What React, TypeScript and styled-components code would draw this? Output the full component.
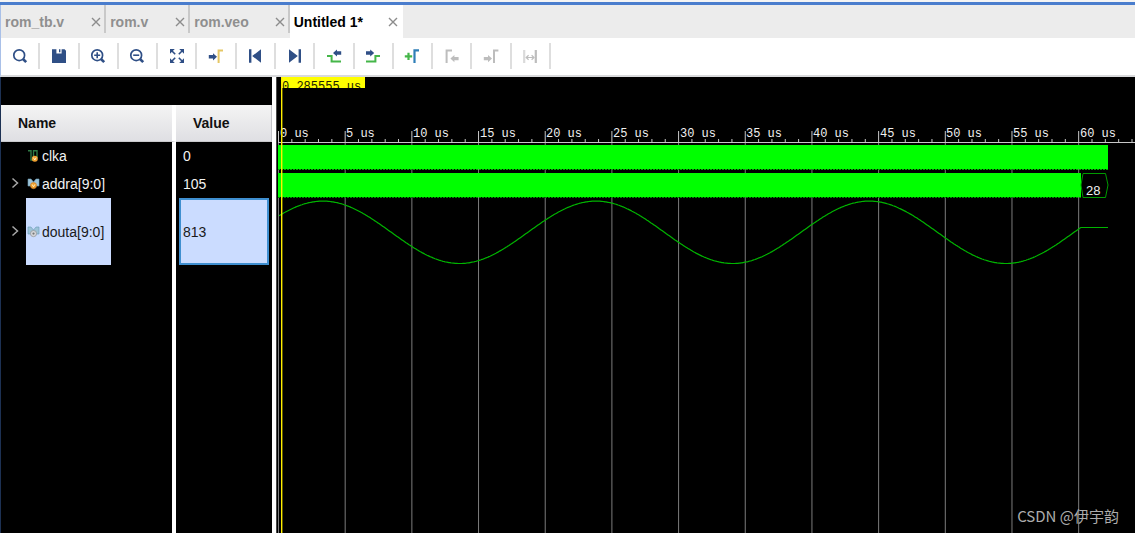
import React from "react";
import styled, { createGlobalStyle } from "styled-components";

const NAVY = "#2f4f86";
const GREEN = "#45b649";
const GREY = "#bdbdbd";

const GlobalStyle = createGlobalStyle`
  * { box-sizing: border-box; }
  body { margin: 0; background: #000; font-family: "Liberation Sans", Arial, sans-serif; font-size: 14px; }
  button { font: inherit; color: inherit; background: none; border: 0; padding: 0; margin: 0; cursor: pointer; }
`;

const Window = styled.div`
  position: relative;
  display: flex;
  flex-direction: column;
  min-height: 100vh;
  background: #000;
`;

const TopAccent = styled.div`
  height: 5px;
  border-top: 2px solid #f4f4f4;
  background: #4a7dcd;
`;

const TabBar = styled.div`
  display: flex;
  height: 33px;
  background: #ececec;
  border-left: 1px solid #a9c0e8;
`;

const TabItem = styled.div<{ $active?: boolean }>`
  display: flex;
  align-items: center;
  height: 33px;
  padding: 0 ${(p) => (p.$active ? 4 : 2)}px 0 4px;
  background: ${(p) => (p.$active ? "#fff" : "transparent")};
  color: ${(p) => (p.$active ? "#000" : "#8f8f8f")};
`;

const TabSeparator = styled.div`
  width: 2px;
  height: 28px;
  background: #c9c9c9;
`;

const TabLabel = styled.button`
  font-weight: bold;
  line-height: 16px;
  white-space: nowrap;
`;

const CloseButton = styled.button<{ $gap: number }>`
  display: flex;
  margin-left: ${(p) => p.$gap}px;
  color: #8c8c8c;
`;

const Toolbar = styled.div`
  background: #fff;
  height: 39px;
  border-left: 1px solid #a9c0e8;
  border-bottom: 2px solid #d9dadc;
`;

const ToolGroup = styled.div`
  display: flex;
  max-width: 550px;
  padding-top: 5px;
`;

const ToolButton = styled.button`
  flex: 1;
  display: flex;
  align-items: center;
  justify-content: center;
  height: 26px;
  border-right: 2px solid #dedede;
`;

const Workspace = styled.main`
  flex: 1;
  display: flex;
`;

const SignalPanel = styled.section`
  flex: none;
  display: flex;
  flex-direction: column;
  width: 276px;
  padding-top: 28px;
  border-left: 1px solid #1d3153;
  border-right: 4px solid #fff;
`;

const SignalTable = styled.table`
  flex: 1;
  width: 100%;
  table-layout: fixed;
  border-spacing: 0;
  color: #f2f2f2;
  line-height: 16px;
`;

const HeadCell = styled.th`
  height: 37px;
  padding: 0 17px;
  text-align: left;
  color: #111;
  background: linear-gradient(#f4f4f4, #dfdfe3);
  border-bottom: 1px solid #c9c9cc;
  border-right: 1px solid #c4c4c8;

  &:first-child { width: 175px; border-right: 4px solid #fff; }
`;

const Cell = styled.td<{ $height?: number }>`
  height: ${(p) => (p.$height ? `${p.$height}px` : "auto")};
  padding: 0;

  &:first-child { border-right: 4px solid #fff; }
`;

const NameLine = styled.div`
  display: flex;
  align-items: center;
`;

const ExpandSlot = styled.span`
  flex: none;
  display: flex;
  justify-content: center;
  width: 25px;
  padding-left: 2px;
`;

const SignalName = styled.span<{ $selected?: boolean; $height: number }>`
  display: flex;
  align-items: center;
  gap: 2px;
  width: 85px;
  height: ${(p) => p.$height}px;
  color: ${(p) => (p.$selected ? "#1a1a1a" : "#f2f2f2")};
  background: ${(p) => (p.$selected ? "#cbdcff" : "transparent")};
`;

const SignalValue = styled.div<{ $selected?: boolean; $height: number }>`
  display: flex;
  align-items: center;
  height: ${(p) => p.$height}px;
  margin: 0 3px;
  padding-left: ${(p) => (p.$selected ? 2 : 4)}px;
  border: ${(p) => (p.$selected ? "2px solid #3f8fd0" : "0")};
  color: ${(p) => (p.$selected ? "#1a1a1a" : "#f2f2f2")};
  background: ${(p) => (p.$selected ? "#cbdcff" : "transparent")};
`;

const WavePanel = styled.section`
  flex: 1;
  min-width: 0;
  display: flex;
  border-left: 1px solid #4a4a4a;
`;

const Plot = styled.svg`
  flex: 1;
  min-width: 0;
  display: block;
`;

const Watermark = styled.div`
  position: absolute;
  right: 16px;
  bottom: 7px;
  font-family: "Noto Sans CJK SC", sans-serif;
  font-size: 15px;
  line-height: 20px;
  color: #acacac;
`;

const Icon = ({ children }: { children: React.ReactNode }) => (
  <svg width="18" height="18" viewBox="0 0 18 18" fill="none" aria-hidden="true">
    {children}
  </svg>
);

const Lens = ({ children }: { children?: React.ReactNode }) => (
  <Icon>
    <circle cx="8.2" cy="8.2" r="5.4" stroke={NAVY} strokeWidth="1.7" />
    <path d="M12 12L15.2 15.2" stroke={NAVY} strokeWidth="2.6" />
    {children}
  </Icon>
);

const ARROW_RIGHT = "M0 -1.7H4.2V-3.6L8.2 0L4.2 3.6V1.7H0Z";
const ARROW_LEFT = "M8.2 -1.7H4V-3.6L0 0L4 3.6V1.7H8.2Z";

const tools: { label: string; icon: React.ReactNode }[] = [
  { label: "Search", icon: <Lens /> },
  {
    label: "Save",
    icon: (
      <Icon>
        <path d="M2 2.3H6.4V6.6H11.6V2.3H14.6L16 3.7V16H2Z" fill={NAVY} />
        <path d="M9 2.3H10.4V5.2H9Z" fill={NAVY} />
      </Icon>
    ),
  },
  { label: "Zoom in", icon: <Lens><path d="M5.2 8.2H11.2M8.2 5.2V11.2" stroke={NAVY} strokeWidth="1.6" /></Lens> },
  { label: "Zoom out", icon: <Lens><path d="M5.2 8.2H11.2" stroke={NAVY} strokeWidth="1.6" /></Lens> },
  {
    label: "Zoom fit",
    icon: (
      <Icon>
        <path d="M2 2H6.8L2 6.8ZM16 2V6.8L11.2 2ZM2 16V11.2L6.8 16ZM16 16H11.2L16 11.2Z" fill={NAVY} />
        <path d="M3.5 3.5L7.2 7.2M14.5 3.5L10.8 7.2M3.5 14.5L7.2 10.8M14.5 14.5L10.8 10.8" stroke={NAVY} strokeWidth="1.6" />
      </Icon>
    ),
  },
  {
    label: "Go to cursor",
    icon: (
      <Icon>
        <path d={ARROW_RIGHT} transform="translate(1.8 9.8)" fill={NAVY} />
        <path d="M11.6 16V3.4H16" stroke="#e5c765" strokeWidth="2" />
      </Icon>
    ),
  },
  { label: "Go to start", icon: <Icon><path d="M3 2.3H5.4V15.7H3ZM15 2.3V15.7L6.2 9Z" fill={NAVY} /></Icon> },
  { label: "Go to end", icon: <Icon><path d="M12.6 2.3H15V15.7H12.6ZM3 2.3V15.7L11.8 9Z" fill={NAVY} /></Icon> },
  {
    label: "Previous transition",
    icon: (
      <Icon>
        <path d="M2 9H6.6V14.6H16" stroke={GREEN} strokeWidth="2" />
        <path d={ARROW_LEFT} transform="translate(8 6)" fill={NAVY} />
      </Icon>
    ),
  },
  {
    label: "Next transition",
    icon: (
      <Icon>
        <path d="M2 14.6H11.4V9H16" stroke={GREEN} strokeWidth="2" />
        <path d={ARROW_RIGHT} transform="translate(2 6)" fill={NAVY} />
      </Icon>
    ),
  },
  {
    label: "Add marker",
    icon: (
      <Icon>
        <path d="M1.8 9.4H9.2M5.5 5.7V13.1" stroke={GREEN} strokeWidth="2.2" />
        <path d="M11.5 16V3.4H16" stroke="#2f7fb8" strokeWidth="2.2" />
      </Icon>
    ),
  },
  {
    label: "Previous marker",
    icon: (
      <Icon>
        <path d="M3.6 16V3.4H9" stroke={GREY} strokeWidth="2" />
        <path d={ARROW_LEFT} transform="translate(7.4 11.6)" fill={GREY} />
      </Icon>
    ),
  },
  {
    label: "Next marker",
    icon: (
      <Icon>
        <path d={ARROW_RIGHT} transform="translate(1.8 11.6)" fill={GREY} />
        <path d="M12 16V3.4H16.4" stroke={GREY} strokeWidth="2" />
      </Icon>
    ),
  },
  {
    label: "Swap cursors",
    icon: (
      <Icon>
        <path d="M3.2 3V16" stroke="#dadada" strokeWidth="2.2" />
        <path d="M14.8 3V16" stroke={GREY} strokeWidth="2.2" />
        <path d="M5.5 10.5H12.8M7.6 8.2L5.2 10.5L7.6 12.8M10.6 8.2L13 10.5L10.6 12.8" stroke={GREY} strokeWidth="1.2" />
      </Icon>
    ),
  },
];

const tabs = [
  { title: "rom_tb.v", gap: 26 },
  { title: "rom.v", gap: 26 },
  { title: "rom.veo", gap: 25 },
  { title: "Untitled 1*", gap: 24, active: true },
];

const ClockIcon = () => (
  <svg width="14" height="14" viewBox="0 0 14 14" fill="none" aria-hidden="true">
    <path d="M2 1.7H5V11H7.5M7.5 8V1.7H11V9" stroke="#2f7a44" strokeWidth="1.4" />
    <circle cx="8.8" cy="9.8" r="3" fill="#f0a030" />
    <path d="M7.4 8.6L8.8 11L10.2 8.6" stroke="#fff0c0" strokeWidth="1" />
  </svg>
);

const BusIcon = ({ output }: { output?: boolean }) => (
  <svg width="14" height="14" viewBox="0 0 14 14" fill="none" aria-hidden="true">
    <path d="M2 2H5L7.5 5L10 2H13V9H10L7.5 7L5 9H2Z" fill="#9dc3d8" stroke="#6a9ab5" strokeWidth="0.6" />
    <circle cx="7.5" cy="8.6" r="3.1" fill={output ? "#d4d6da" : "#f0a030"} stroke={output ? "#888" : "#c87820"} strokeWidth="0.6" />
    {output ? (
      <circle cx="7.5" cy="8.6" r="1.1" fill="#777" />
    ) : (
      <path d="M6.1 7.4L7.5 9.8L8.9 7.4" stroke="#fff0c0" strokeWidth="1" />
    )}
  </svg>
);

const signals = [
  { name: "clka", value: "0", height: 28, icon: <ClockIcon />, expandable: false, selected: false },
  { name: "addra[9:0]", value: "105", height: 28, icon: <BusIcon />, expandable: true, selected: false },
  { name: "douta[9:0]", value: "813", height: 67, icon: <BusIcon output />, expandable: true, selected: true },
];

// Time axis: pixels per 5 us division and the position of t = 0.
const DIVISION = 66.68;
const ORIGIN = 1.5;
const majors = Array.from({ length: 13 }, (_, i) => i);
const minors = Array.from({ length: 65 }, (_, i) => i).filter((i) => i % 5 !== 0);

const SINE_END = 803;
const sine = Array.from({ length: SINE_END - 1 }, (_, i) => {
  const x = i + 2;
  const y = 155.3 - 31.2 * Math.cos((2 * Math.PI * (x - 46)) / 273.1);
  return `${x},${y.toFixed(1)}`;
}).join(" ");

const Waveform = () => (
  <Plot width="100%" height="100%" role="img" aria-label="Simulation waveform">
    {majors.map((i) => (
      <line key={i} x1={ORIGIN + i * DIVISION} x2={ORIGIN + i * DIVISION} y1="66" y2="100%" stroke="#7c7c7c" />
    ))}
    {majors.map((i) => (
      <line key={i} x1={ORIGIN + i * DIVISION} x2={ORIGIN + i * DIVISION} y1="54" y2="66" stroke="#c8c8c8" />
    ))}
    {minors.map((i) => (
      <line key={i} x1={ORIGIN + (i * DIVISION) / 5} x2={ORIGIN + (i * DIVISION) / 5} y1="62" y2="65" stroke="#c8c8c8" />
    ))}
    <line x1="1" x2="100%" y1="65.5" y2="65.5" stroke="#c8c8c8" />
    <g fontFamily='"Liberation Mono", monospace' fontSize="12" fill="#f0f0f0">
      {majors.map((i) => (
        <text key={i} x={Math.round(ORIGIN + i * DIVISION) + 1} y="60" xmlSpace="preserve">
          {`${i * 5} us`}
        </text>
      ))}
    </g>
    <rect x="1" y="68" width="830" height="24" fill="#00ff00" />
    <path d="M1 92.5H831" stroke="#00a800" strokeDasharray="2 1" />
    <rect x="1" y="96" width="803" height="24" fill="#00ff00" />
    <path d="M1 120.5H804" stroke="#008c00" strokeDasharray="2 1" />
    <path d="M804 108L806 96.5H828.5L831 108L828.5 120.5H806Z" fill="#000" stroke="#009a00" />
    <text x="809" y="118" fontFamily='"Liberation Sans", sans-serif' fontSize="13" fill="#f0f0f0">28</text>
    <polyline points={`${sine} 804,150.5 831,150.5`} fill="none" stroke="#00b400" strokeWidth="1.2" />
    <rect x="4" y="0" width="84" height="11" fill="#ffff00" />
    <svg x="4" y="0" width="84" height="11">
      <text x="1" y="13" fontFamily='"Liberation Mono", monospace' fontSize="12" fill="#202000">0.285555 us</text>
    </svg>
    <line x1="4.7" x2="4.7" y1="0" y2="100%" stroke="#ffee00" strokeWidth="1.4" />
  </Plot>
);

export default function App() {
  return (
    <Window>
      <GlobalStyle />
      <TopAccent />
      <TabBar>
        {tabs.map((tab, i) => (
          <React.Fragment key={tab.title}>
            {i > 0 && <TabSeparator />}
            <TabItem $active={tab.active}>
              <TabLabel>{tab.title}</TabLabel>
              <CloseButton $gap={tab.gap} aria-label={`Close ${tab.title}`}>
                <svg width="12" height="12" viewBox="0 0 12 12" aria-hidden="true">
                  <path d="M2 2L10 10M10 2L2 10" stroke="currentColor" strokeWidth="1.4" />
                </svg>
              </CloseButton>
            </TabItem>
          </React.Fragment>
        ))}
      </TabBar>
      <Toolbar>
        <ToolGroup>
          {tools.map((tool) => (
            <ToolButton key={tool.label} aria-label={tool.label}>{tool.icon}</ToolButton>
          ))}
        </ToolGroup>
      </Toolbar>
      <Workspace>
        <SignalPanel>
          <SignalTable>
            <thead>
              <tr>
                <HeadCell scope="col">Name</HeadCell>
                <HeadCell scope="col">Value</HeadCell>
              </tr>
            </thead>
            <tbody>
              {signals.map((s) => (
                <tr key={s.name}>
                  <Cell $height={s.height}>
                    <NameLine>
                      <ExpandSlot>
                        {s.expandable && (
                          <button aria-label={`Expand ${s.name}`}>
                            <svg width="8" height="12" viewBox="0 0 8 12" fill="none" aria-hidden="true">
                              <path d="M1.5 1.5L6.5 6L1.5 10.5" stroke="#a8a8a8" strokeWidth="1.5" />
                            </svg>
                          </button>
                        )}
                      </ExpandSlot>
                      <SignalName $selected={s.selected} $height={s.height}>
                        {s.icon}
                        {s.name}
                      </SignalName>
                    </NameLine>
                  </Cell>
                  <Cell $height={s.height}>
                    <SignalValue $selected={s.selected} $height={s.height}>{s.value}</SignalValue>
                  </Cell>
                </tr>
              ))}
              <tr>
                <Cell />
                <Cell />
              </tr>
            </tbody>
          </SignalTable>
        </SignalPanel>
        <WavePanel>
          <Waveform />
        </WavePanel>
      </Workspace>
      <Watermark>CSDN @伊宇韵</Watermark>
    </Window>
  );
}
